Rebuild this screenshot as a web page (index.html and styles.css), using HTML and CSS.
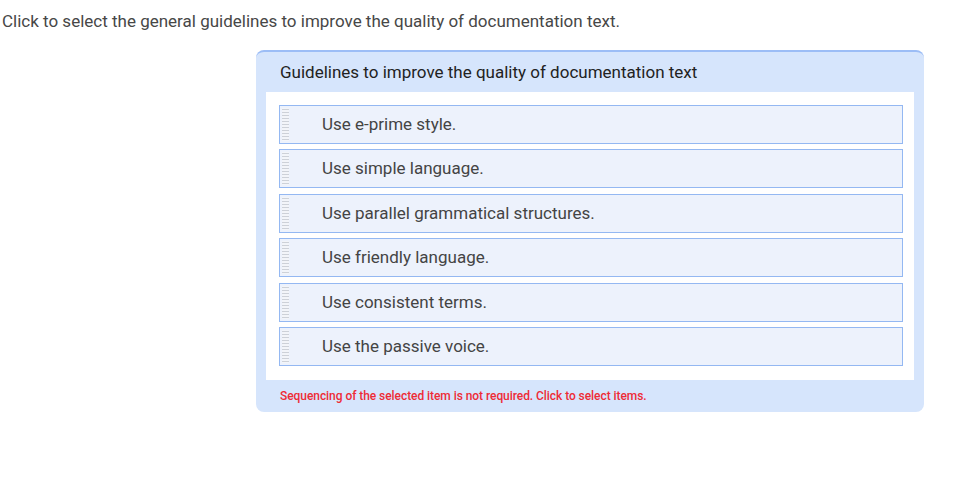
FILE: index.html
```html
<!DOCTYPE html>
<html>
<head>
<meta charset="utf-8">
<link rel="stylesheet" href="styles.css">
</head>
<body>
<p class="prompt">Click to select the general guidelines to improve the quality of documentation text.</p>
<div class="panel">
  <div class="panel-title">Guidelines to improve the quality of documentation text</div>
  <div class="panel-body">
    <ul class="items">
      <li class="item"><span class="grip"></span><span class="label">Use e-prime style.</span></li>
      <li class="item"><span class="grip"></span><span class="label">Use simple language.</span></li>
      <li class="item"><span class="grip"></span><span class="label">Use parallel grammatical structures.</span></li>
      <li class="item"><span class="grip"></span><span class="label">Use friendly language.</span></li>
      <li class="item"><span class="grip"></span><span class="label">Use consistent terms.</span></li>
      <li class="item"><span class="grip"></span><span class="label">Use the passive voice.</span></li>
    </ul>
  </div>
  <div class="panel-note">Sequencing of the selected item is not required. Click to select items.</div>
</div>
</body>
</html>
```
FILE: styles.css
```css
html, body {
  margin: 0;
  padding: 0;
  background: #ffffff;
}
body {
  font-family: Roboto, "Liberation Sans", sans-serif;
  color: #444444;
}
.prompt {
  margin: 0;
  padding: 11px 0 0 2px;
  font-size: 17px;
  line-height: 20px;
  color: #474747;
}
.panel {
  margin: 19px 0 0 256px;
  width: 668px;
  background: #d6e5fc;
  border-top: 2px solid #9cbdf6;
  border-radius: 8px;
  box-sizing: border-box;
}
.panel-title {
  padding: 10px 0 0 24px;
  height: 40px;
  box-sizing: border-box;
  font-size: 17px;
  line-height: 20px;
  color: #222222;
}
.panel-body {
  margin: 0 10px;
  background: #ffffff;
  padding: 13px 11px 14px 13px;
}
.items {
  list-style: none;
  margin: 0;
  padding: 0;
  display: flex;
  flex-direction: column;
  gap: 5.4px;
}
.item {
  display: flex;
  align-items: stretch;
  height: 39px;
  box-sizing: border-box;
  border: 1px solid #94b8f2;
  background: #edf2fc;
}
.grip {
  width: 7px;
  margin: 2px 0 2px 2px;
  background-color: #f3f5f9;
  background-image: radial-gradient(circle, #cdd1d8 0.7px, transparent 0.9px);
  background-size: 2px 3px;
}
.label {
  padding-left: 33px;
  font-size: 17px;
  line-height: 37px;
  color: #444444;
}
.panel-note {
  height: 32px;
  padding: 9px 0 0 24px;
  box-sizing: border-box;
  font-size: 12px;
  line-height: 14px;
  font-weight: 500;
  letter-spacing: -0.06px;
  color: #ee2b36;
}
```
